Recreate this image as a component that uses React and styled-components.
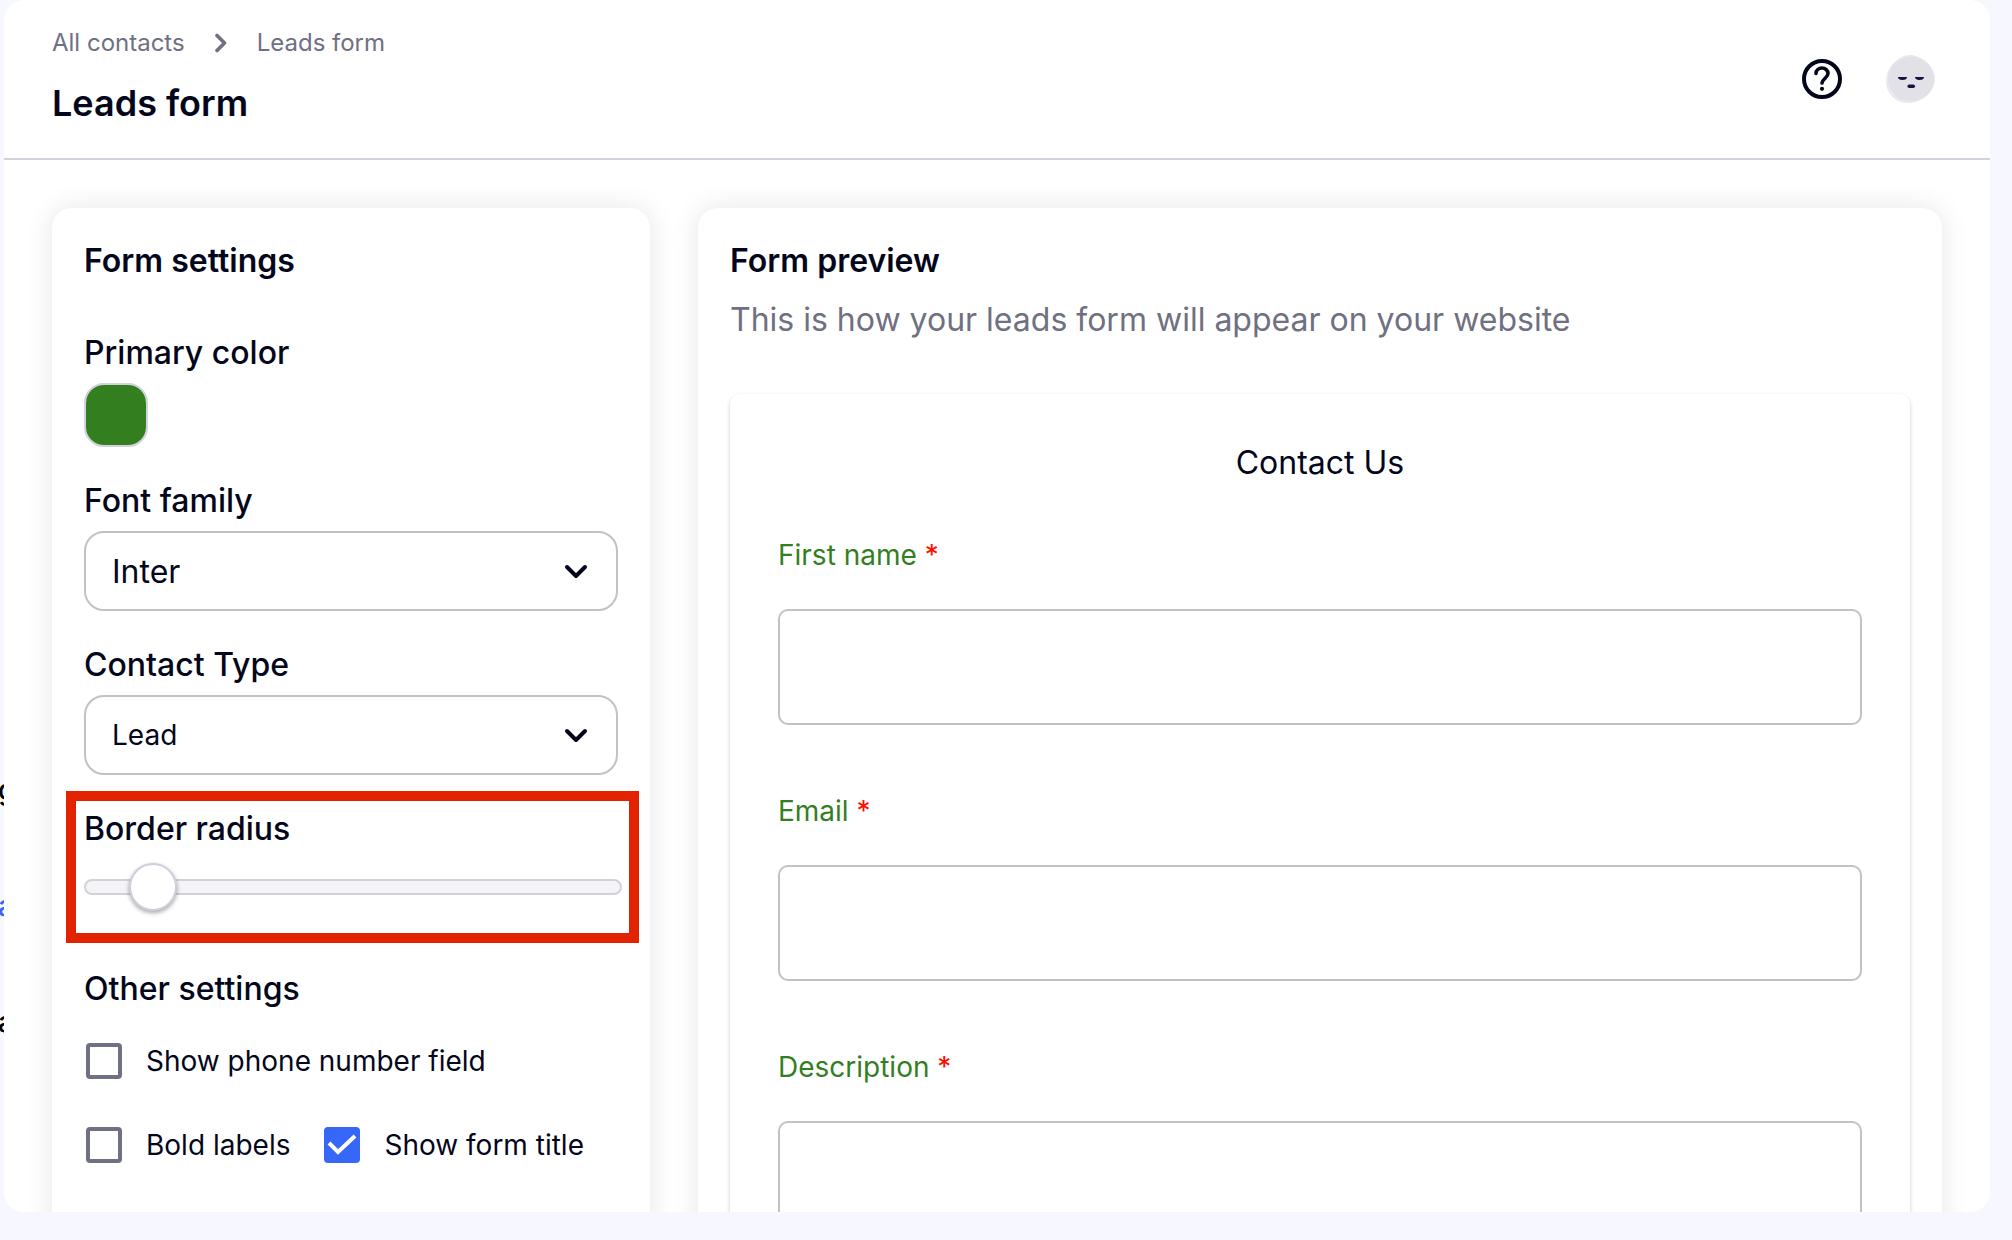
import React, { useState } from "react";
import styled, { createGlobalStyle } from "styled-components";

const GlobalStyle = createGlobalStyle`
  * {
    box-sizing: border-box;
  }
  body {
    margin: 0;
    background: #f6f7ff;
    color: #04071b;
    font-family: Inter, "Liberation Sans", sans-serif;
    overflow: hidden;
  }
`;

const Layout = styled.div`
  display: grid;
  grid-template-columns: 4px minmax(0, 1fr);
  height: 100vh;
  padding: 0 22px 28px 0;
`;

const Sidebar = styled.nav`
  display: flex;
  flex-direction: column;
  gap: 76px;
  padding-top: 770px;
  overflow: hidden;
`;

const SidebarItem = styled.a`
  font-size: 28px;
  font-weight: 500;
  line-height: 40px;
  text-indent: -2px;
  text-decoration: none;
  color: ${(props) => (props.$active ? "#3767f6" : "#000000")};
`;

const Main = styled.main`
  display: flex;
  flex-direction: column;
  background: #ffffff;
  border-radius: 20px;
  overflow: hidden;
`;

const Header = styled.header`
  display: flex;
  align-items: center;
  justify-content: space-between;
  flex-shrink: 0;
  height: 160px;
  padding: 0 54px 0 48px;
  border-bottom: 2px solid #d2d1dd;
`;

const Heading = styled.div`
  padding-bottom: 8px;
`;

const Breadcrumb = styled.nav`
  display: flex;
  align-items: center;
  gap: 30px;
  color: #6f7081;
`;

const Crumb = styled.a`
  font-size: 24px;
  line-height: 36px;
  color: inherit;
  text-decoration: none;
`;

const PageTitle = styled.h1`
  margin: 20px 0 0;
  font-size: 36px;
  font-weight: 600;
  line-height: 44px;
`;

const HeaderActions = styled.div`
  display: flex;
  align-items: center;
  gap: 44px;
`;

const IconButton = styled.button`
  display: flex;
  padding: 0;
  border: none;
  background: none;
  cursor: pointer;
`;

const Content = styled.div`
  display: grid;
  grid-template-columns: repeat(12, minmax(0, 1fr));
  gap: 48px;
  flex: 1;
  min-height: 0;
  padding: 48px 48px 0;
`;

const Card = styled.section`
  grid-column: span ${(props) => props.$span};
  height: 1300px;
  padding: 32px;
  border-radius: 20px;
  background: #ffffff;
  box-shadow: 0 0 28px rgba(0, 0, 0, 0.1);
`;

const CardTitle = styled.h2`
  margin: 0;
  font-size: 32px;
  font-weight: 600;
  line-height: 42px;
`;

const Settings = styled.form`
  display: flex;
  flex-direction: column;
  gap: 28px;
  margin-top: 45px;
`;

const Setting = styled.div`
  display: flex;
  flex-direction: column;
  gap: 4px;
`;

const SettingLabel = styled.label`
  font-size: 32px;
  font-weight: 500;
  line-height: 52px;
`;

const ColorInput = styled.input`
  appearance: none;
  width: 64px;
  height: 64px;
  padding: 0;
  border: 2px solid #d2d1dd;
  border-radius: 20px;
  background: #337f1f;
  overflow: hidden;

  &::-webkit-color-swatch-wrapper {
    padding: 0;
  }
  &::-webkit-color-swatch {
    border: none;
  }
`;

const SelectWrapper = styled.div`
  display: grid;
  align-items: center;

  > * {
    grid-area: 1 / 1;
  }
  > svg {
    justify-self: end;
    margin-right: 30px;
    pointer-events: none;
  }
`;

const Select = styled.select`
  appearance: none;
  width: 100%;
  height: 80px;
  padding: 0 60px 0 26px;
  border: 2px solid #c2c2c4;
  border-radius: 20px;
  background: #ffffff;
  color: inherit;
  font-family: inherit;
  font-size: ${(props) => (props.$small ? "28px" : "32px")};
`;

const HighlightedSetting = styled(Setting)`
  position: relative;
  gap: 8px;

  &::after {
    content: "";
    position: absolute;
    top: -12px;
    right: -21px;
    bottom: -32px;
    left: -18px;
    border: 10px solid #e32200;
    pointer-events: none;
  }
`;

const Slider = styled.input`
  appearance: none;
  width: calc(100% + 4px);
  height: 48px;
  margin: 0;
  background: none;

  &::-webkit-slider-runnable-track {
    height: 16px;
    border: 2px solid #d2d1db;
    border-radius: 8px;
    background: #f4f4f7;
  }
  &::-webkit-slider-thumb {
    appearance: none;
    width: 48px;
    height: 48px;
    margin-top: -18px;
    border: 2px solid #d0cfd9;
    border-radius: 50%;
    background: #ffffff;
    background-clip: padding-box;
    box-shadow: 0 2px 4px rgba(0, 0, 0, 0.35);
  }
`;

const OtherSettings = styled.fieldset`
  margin: 24px 0 0;
  padding: 0;
  border: none;
`;

const Legend = styled.legend`
  padding: 0;
  font-size: 32px;
  font-weight: 500;
  line-height: 52px;
`;

const CheckboxRows = styled.div`
  display: flex;
  flex-wrap: wrap;
  gap: 48px 34px;
  padding: 28px 2px 0;
`;

const CheckboxLabel = styled.label`
  display: flex;
  align-items: center;
  gap: 24px;
  font-size: 28px;
  line-height: 36px;
`;

const CheckboxBox = styled.span`
  display: grid;

  > * {
    grid-area: 1 / 1;
  }
  > svg {
    pointer-events: none;
  }
`;

const CheckboxInput = styled.input`
  appearance: none;
  width: 36px;
  height: 36px;
  margin: 0;
  border: 4px solid #6f7081;
  border-radius: 4px;

  &:checked {
    border-color: #3767f6;
    background: #3767f6;
  }
`;

const Subtitle = styled.p`
  margin: 14px 0 0;
  font-size: 32px;
  line-height: 48px;
  color: #6f7081;
`;

const Preview = styled.form`
  height: 1100px;
  margin-top: 50px;
  padding: 44px 48px;
  border-radius: 10px;
  box-shadow: 0 2px 4px rgba(0, 0, 0, 0.2);
`;

const PreviewTitle = styled.h3`
  margin: 0 0 46px;
  font-size: 32px;
  font-weight: 400;
  line-height: 50px;
  text-align: center;
`;

const Field = styled.div`
  display: flex;
  flex-direction: column;
  gap: 33px;
  margin-bottom: 65px;
`;

const FieldLabel = styled.label`
  font-size: 28px;
  line-height: 42px;
  color: #337f1f;
`;

const Required = styled.span`
  color: #ff0d00;
`;

const FieldInput = styled.input`
  width: 100%;
  height: ${(props) => (props.$tall ? "240px" : "116px")};
  padding: 0 24px;
  border: 2px solid #c2c2c4;
  border-radius: 10px;
  background: #ffffff;
  font-family: inherit;
  font-size: 28px;
  resize: none;
`;

const ChevronRight = () => (
  <svg width="12" height="20" viewBox="0 0 12 20" fill="none" aria-hidden="true">
    <path
      d="M2 2.500L9.500 10 2 17.500"
      stroke="#6f7081"
      strokeWidth="3.600"
      strokeLinecap="round"
      strokeLinejoin="round"
    />
  </svg>
);

const ChevronDown = () => (
  <svg width="24" height="16" viewBox="0 0 24 16" fill="none" aria-hidden="true">
    <path
      d="M3 4l9 9 9-9"
      stroke="#04071b"
      strokeWidth="4"
      strokeLinecap="round"
      strokeLinejoin="round"
    />
  </svg>
);

const HelpIcon = () => (
  <svg width="40" height="40" viewBox="0 0 40 40" fill="none" aria-hidden="true">
    <circle cx="20" cy="20" r="18" stroke="#04071b" strokeWidth="4" />
    <path
      d="M14 14.500c0-3.200 2.700-5.500 6-5.500s6 2.500 6 5.500c0 4-5.400 5.200-6 9.400"
      stroke="#04071b"
      strokeWidth="3.600"
      strokeLinecap="round"
    />
    <circle cx="20" cy="29.800" r="2.100" fill="#04071b" />
  </svg>
);

const AvatarIcon = () => (
  <svg width="50" height="50" viewBox="0 0 50 50" fill="none" aria-hidden="true">
    <path
      d="M24 1C34 1 49 11 49 25S34 49 22 49 0 40 0 27 12 1 24 1Z"
      fill="#e9e9ee"
    />
    <ellipse cx="25" cy="25" rx="23" ry="22.500" fill="#e1e1e7" />
    <path
      d="M12 23h9c0 2-1.600 3-4.500 3S12 25 12 23ZM29 23h9c0 2-1.600 3-4.500 3S29 25 29 23Z"
      fill="#191240"
    />
    <rect x="21.500" y="30.500" width="7.500" height="3.400" rx="1.700" fill="#191240" />
  </svg>
);

const CheckIcon = () => (
  <svg width="36" height="36" viewBox="0 0 36 36" fill="none" aria-hidden="true">
    <path d="M5 16l9 9 17-16" stroke="#ffffff" strokeWidth="4" />
  </svg>
);

const Checkbox = ({ label, defaultChecked = false }) => {
  const [checked, setChecked] = useState(defaultChecked);
  return (
    <CheckboxLabel>
      <CheckboxBox>
        <CheckboxInput
          type="checkbox"
          checked={checked}
          onChange={(e) => setChecked(e.target.checked)}
        />
        {checked && <CheckIcon />}
      </CheckboxBox>
      {label}
    </CheckboxLabel>
  );
};

const PreviewField = ({ id, label, tall }) => (
  <Field>
    <FieldLabel htmlFor={id}>
      {label} <Required>*</Required>
    </FieldLabel>
    <FieldInput id={id} as={tall ? "textarea" : "input"} $tall={tall} />
  </Field>
);

const App = () => {
  return (
    <>
      <GlobalStyle />
      <Layout>
        <Sidebar>
          <SidebarItem href="#">g</SidebarItem>
          <SidebarItem href="#" $active>
            a
          </SidebarItem>
          <SidebarItem href="#">a</SidebarItem>
        </Sidebar>
        <Main>
          <Header>
            <Heading>
              <Breadcrumb>
                <Crumb href="#">All contacts</Crumb>
                <ChevronRight />
                <Crumb href="#">Leads form</Crumb>
              </Breadcrumb>
              <PageTitle>Leads form</PageTitle>
            </Heading>
            <HeaderActions>
              <IconButton type="button" aria-label="Help">
                <HelpIcon />
              </IconButton>
              <IconButton type="button" aria-label="Account">
                <AvatarIcon />
              </IconButton>
            </HeaderActions>
          </Header>
          <Content>
            <Card $span={4}>
              <CardTitle>Form settings</CardTitle>
              <Settings>
                <Setting>
                  <SettingLabel htmlFor="color">Primary color</SettingLabel>
                  <ColorInput id="color" type="color" defaultValue="#337f1f" />
                </Setting>
                <Setting>
                  <SettingLabel htmlFor="font">Font family</SettingLabel>
                  <SelectWrapper>
                    <Select id="font">
                      <option>Inter</option>
                    </Select>
                    <ChevronDown />
                  </SelectWrapper>
                </Setting>
                <Setting>
                  <SettingLabel htmlFor="type">Contact Type</SettingLabel>
                  <SelectWrapper>
                    <Select id="type" $small>
                      <option>Lead</option>
                    </Select>
                    <ChevronDown />
                  </SelectWrapper>
                </Setting>
                <HighlightedSetting>
                  <SettingLabel htmlFor="radius">Border radius</SettingLabel>
                  <Slider id="radius" type="range" min="0" max="80" defaultValue="7" />
                </HighlightedSetting>
                <OtherSettings>
                  <Legend>Other settings</Legend>
                  <CheckboxRows>
                    <Checkbox label="Show phone number field" />
                    <Checkbox label="Bold labels" />
                    <Checkbox label="Show form title" defaultChecked />
                  </CheckboxRows>
                </OtherSettings>
              </Settings>
            </Card>
            <Card $span={8}>
              <CardTitle>Form preview</CardTitle>
              <Subtitle>This is how your leads form will appear on your website</Subtitle>
              <Preview>
                <PreviewTitle>Contact Us</PreviewTitle>
                <PreviewField id="first-name" label="First name" />
                <PreviewField id="email" label="Email" />
                <PreviewField id="description" label="Description" tall />
              </Preview>
            </Card>
          </Content>
        </Main>
      </Layout>
    </>
  );
};

export default App;
